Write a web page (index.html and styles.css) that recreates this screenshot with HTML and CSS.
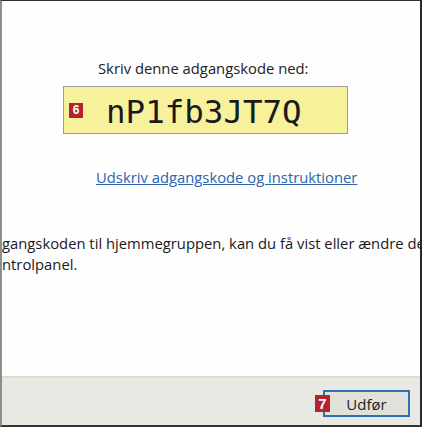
FILE: index.html
```html
<!DOCTYPE html>
<html lang="da">
<head>
<meta charset="utf-8">
<link rel="stylesheet" href="styles.css">
</head>
<body>
<div class="window">
  <div class="content">
    <div class="heading">Skriv denne adgangskode ned:</div>
    <div class="codebox">
      <span class="badge">6</span>
      <span class="code">nP1fb3JT7Q</span>
    </div>
    <a class="link" href="#">Udskriv adgangskode og instruktioner</a>
    <div class="para">
      <div class="line">gangskoden til hjemmegruppen, kan du få vist eller ændre den</div>
      <div class="line">ntrolpanel.</div>
    </div>
  </div>
  <div class="footer">
    <div class="btnwrap">
      <span class="badge badge7">7</span>
      <button class="btn">Udfør</button>
    </div>
  </div>
</div>
</body>
</html>
```
FILE: styles.css
```css
* { box-sizing: border-box; }
html, body { margin: 0; padding: 0; }
body { width: 422px; height: 427px; overflow: hidden; background: #fff; }
.window {
  width: 422px; height: 427px;
  border-top: 1px solid #2e2e2e;
  border-left: 2px solid #8e8e8e;
  border-right: 2px solid #2a2a2a;
  border-bottom: 2px solid #333;
  display: flex; flex-direction: column;
  font-family: "Open Sans", "Noto Sans", sans-serif;
  color: #1e1e1e;
}
.content {
  height: 375px;
  background: #fefefe;
  display: flex; flex-direction: column; align-items: flex-start;
  overflow: hidden;
}
.heading {
  margin: 57px 0 0 96px;
  font-size: 14.8px; line-height: 20px;
  color: #222;
}
.codebox {
  margin: 8px 0 0 61px;
  width: 285px; height: 48px;
  background: #f8f19c;
  border: 1px solid #9c9c94;
  display: flex; align-items: center;
  padding-left: 5px;
}
.badge {
  display: inline-flex; align-items: center; justify-content: center;
  width: 14px; height: 15px;
  background: #b3242c; color: #fff;
  font-family: "Liberation Sans", Arial, sans-serif; font-weight: bold;
  font-size: 12px; line-height: 1;
}
.code {
  margin-left: 23px;
  font-family: "DejaVu Sans Mono", monospace;
  font-size: 32.5px; line-height: 40px;
  color: #1a1a1a;
  margin-top: 3px;
}
.link {
  margin: 33px 0 0 94px;
  font-size: 14.8px; line-height: 20px;
  color: #2d64ad;
  text-decoration: underline;
}
.para {
  margin-top: 46px;
  width: 418px;
  font-size: 14.8px; line-height: 21px;
  color: #1a1a1a;
}
.line { white-space: nowrap; overflow: hidden; }
.footer {
  flex: 1;
  background: #e9e9e4;
  border-top: 2px solid #dcdcd5;
  display: flex; justify-content: flex-end; align-items: flex-start;
  padding: 12px 10px 0 0;
}
.btnwrap { display: flex; align-items: center; }
.badge7 {
  width: 15px; height: 17px; font-size: 15px;
  margin-right: -7px; position: relative; z-index: 1;
}
.btn {
  width: 87px; height: 27px;
  background: #e1e1dc;
  border: 2px solid #2f6db5;
  font-family: "Open Sans", "Noto Sans", sans-serif;
  font-size: 15px; color: #1e1e1e;
  padding: 0;
}
```
